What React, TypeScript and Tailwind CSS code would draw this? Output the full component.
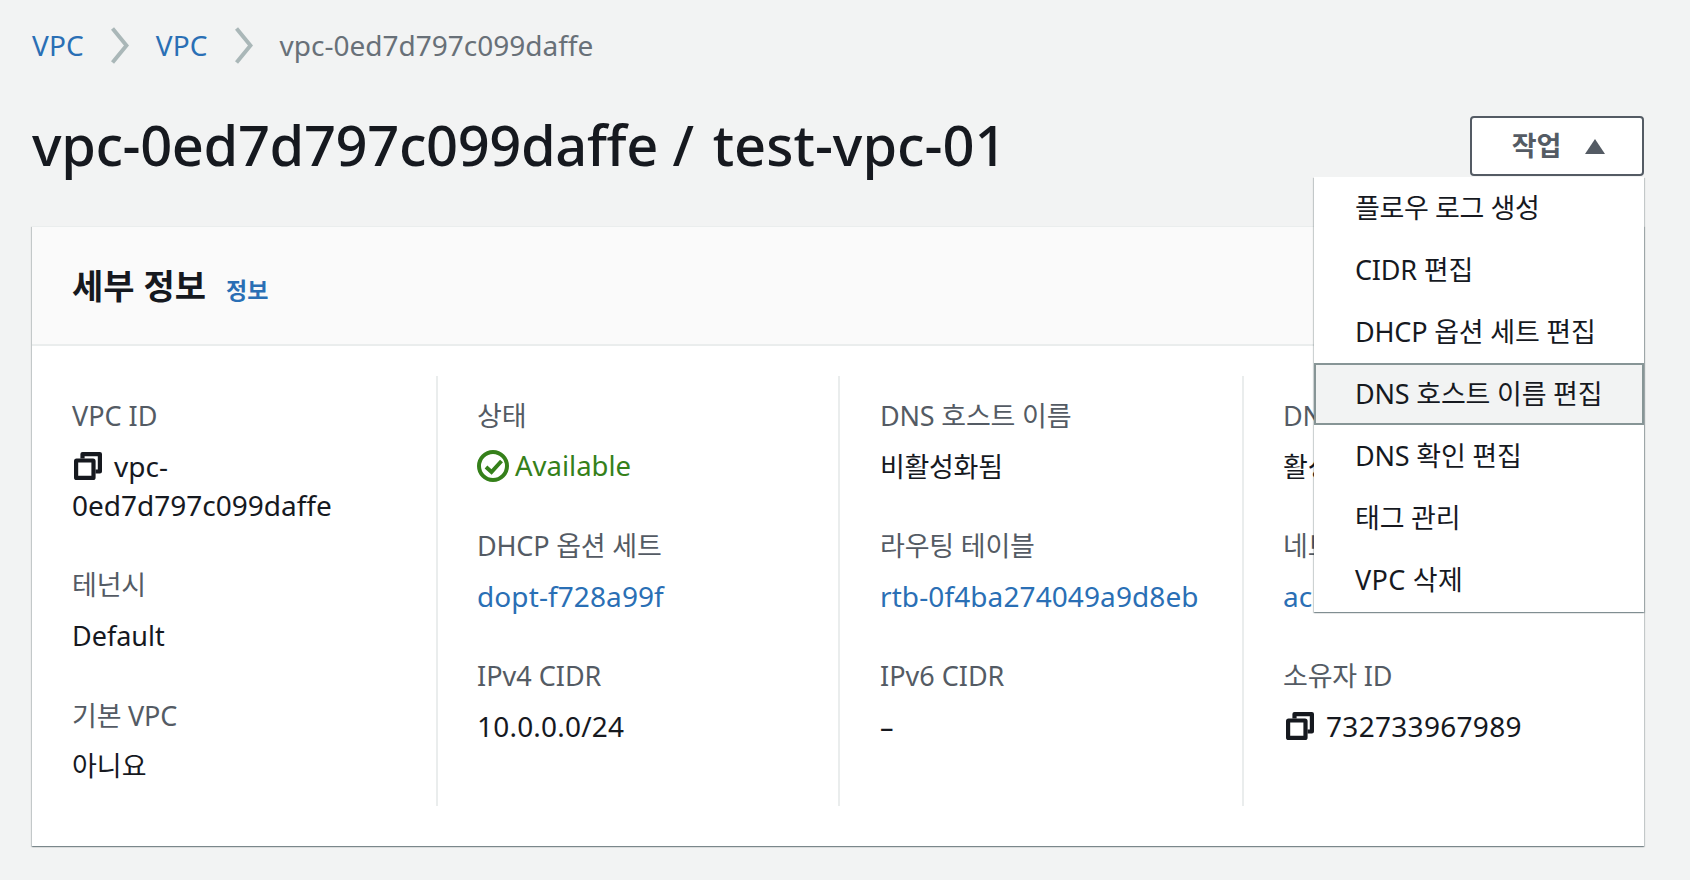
import React from "react";

const font = { fontFamily: '"Noto Sans","Noto Sans CJK KR",sans-serif' };

function CopyIcon({ cls }: { cls: string }) {
  return (
    <svg width="28" height="28" viewBox="0 0 28 28" className={`shrink-0 inline-block align-top ${cls}`} fill="none" stroke="#16191f" strokeWidth="4.2" strokeLinejoin="round">
      <rect x="2.1" y="8.5" width="17.4" height="17.4" rx="0.5" />
      <path d="M8.5 6.5V2.1h17.4v17.4h-4.4" />
    </svg>
  );
}

function Chevron() {
  return (
    <svg width="18" height="37" viewBox="0 0 18 37" className="mx-[27px]" fill="none" stroke="#aab7b8" strokeWidth="4">
      <path d="M1.5 1.5L15.5 18.5L1.5 35.5" />
    </svg>
  );
}

function Field({ label, children, h }: { label: string; children: React.ReactNode; h: string }) {
  const kr = /[가-힣]/.test(label);
  return (
    <div className={h}>
      <div className={`text-[#545b64] leading-[40px] ${kr ? "tracking-[-0.2px]" : ""}`}>{label}</div>
      <div className="mt-[11px] leading-[39px] text-[#16191f]">{children}</div>
    </div>
  );
}

const link = "text-[#2a6fb5] text-[28px] tracking-[0.1px]";
const shadow = "shadow-[0_1px_1px_0_rgba(0,28,36,0.3),1px_1px_1px_0_rgba(0,28,36,0.15),-1px_1px_1px_0_rgba(0,28,36,0.15)]";

export default function App() {
  const items = [
    { t: "플로우 로그 생성", c: "tracking-[-0.4px]" },
    { t: "CIDR 편집", c: "tracking-[-0.2px]" },
    { t: "DHCP 옵션 세트 편집", c: "tracking-[-0.2px]" },
    { t: "DNS 호스트 이름 편집", c: "tracking-[-0.2px]" },
    { t: "DNS 확인 편집", c: "tracking-[-0.2px]" },
    { t: "태그 관리", c: "tracking-[-0.2px]" },
    { t: "VPC 삭제", c: "tracking-[0.3px]" },
  ];
  return (
    <div style={font} className="relative w-[1690px] h-[880px] overflow-hidden bg-[#f2f3f3] text-[27px] text-[#16191f]">
      <div className="px-[32px] pt-[25px] flex items-center h-[65px] text-[28px]">
        <span className={link}>VPC</span>
        <Chevron />
        <span className={link}>VPC</span>
        <Chevron />
        <span className="text-[#687078]">vpc-0ed7d797c099daffe</span>
      </div>

      <div className="flex items-center justify-between pl-[32px] pr-[46px] h-[78px] mt-[42px]">
        <h1 className="text-[56px] leading-[70px] font-medium mt-[-4px]">
          <span className="tracking-[-0.38px]">vpc-0ed7d797c099daffe</span> / <span className="ml-[4px]">test-vpc-01</span>
        </h1>
        <button className="w-[174px] h-[60px] rounded-[4px] border-[2px] border-[#545b64] bg-white flex items-center justify-center gap-[24px] pl-[3px] font-bold text-[#545b64]">
          작업
          <svg width="20" height="15" viewBox="0 0 20 15" fill="#545b64"><path d="M10 0l10 15H0z" /></svg>
        </button>
      </div>

      <section className={`relative mx-[32px] mt-[41px] w-[1612px] h-[620px] bg-white ${shadow} border-t border-[#eaeded]`}>
        <div className="h-[119px] bg-[#fafafa] border-b-[2px] border-[#eaeded] flex items-center pl-[40px] gap-[20px]">
          <h2 className="text-[34px] font-bold mt-[1px]">세부 정보</h2>
          <span className="text-[#2a6fb5] text-[23px] font-bold mt-[10px]">정보</span>
        </div>
        <div className="grid grid-cols-[406px_402px_404px_1fr] pt-[30px] h-[460px]">
          <div className="pl-[40px] pr-[30px] pt-[20px] border-r-[2px] border-[#eaeded] h-[430px]">
            <Field label="VPC ID" h="h-[169px]">
              <span className="ml-[2px]"><CopyIcon cls="mt-[5px]" /></span>
              <span className="ml-[12px] text-[28px]">vpc-</span>
              <br />
              <span className="text-[28px]">0ed7d797c099daffe</span>
            </Field>
            <Field label="테넌시" h="h-[131px]">Default</Field>
            <Field label="기본 VPC" h=""><span className="relative top-[-1px]">아니요</span></Field>
          </div>
          <div className="pl-[39px] pt-[20px] border-r-[2px] border-[#eaeded] h-[430px]">
            <Field label="상태" h="h-[130px]">
              <span className="flex items-center gap-[6px] text-[#35801a] text-[27.5px] mt-[-1px]">
                <svg width="32" height="32" viewBox="0 0 32 32" fill="none" stroke="#35801a" strokeWidth="4"><circle cx="16" cy="16" r="14" /><path d="M9 17l5.5 5L24.5 11" /></svg>
                Available
              </span>
            </Field>
            <Field label="DHCP 옵션 세트" h="h-[130px]"><span className={link}>dopt-f728a99f</span></Field>
            <Field label="IPv4 CIDR" h=""><span className="text-[28px] tracking-[0.2px]">10.0.0.0/24</span></Field>
          </div>
          <div className="pl-[40px] pt-[20px] border-r-[2px] border-[#eaeded] h-[430px]">
            <Field label="DNS 호스트 이름" h="h-[130px]"><span className="tracking-[-0.3px]">비활성화됨</span></Field>
            <Field label="라우팅 테이블" h="h-[130px]"><span className={link}>rtb-0f4ba274049a9d8eb</span></Field>
            <Field label="IPv6 CIDR" h="">–</Field>
          </div>
          <div className="pl-[39px] pt-[20px] h-[430px]">
            <Field label="DNS 확인" h="h-[130px]">활성화됨</Field>
            <Field label="네트워크 ACL" h="h-[130px]"><span className={link}>acl-0f4ba27404</span></Field>
            <Field label="소유자 ID" h="">
              <span className="flex items-center gap-[12px] pl-[3px] text-[28px] tracking-[0.3px]"><CopyIcon cls="mt-[-1px]" />732733967989</span>
            </Field>
          </div>
        </div>
      </section>

      <div className={`absolute left-[1314px] top-[177px] w-[330px] h-[435px] bg-white ${shadow}`}>
        <ul>
          {items.map((it, i) => (
            <li key={it.t} className={`h-[62px] flex items-center whitespace-nowrap ${it.c} ${i === 3 ? "bg-[#f2f3f3] border-2 border-[#879596] pl-[39px]" : "pl-[41px]"}`}>
              {it.t}
            </li>
          ))}
        </ul>
      </div>
    </div>
  );
}
